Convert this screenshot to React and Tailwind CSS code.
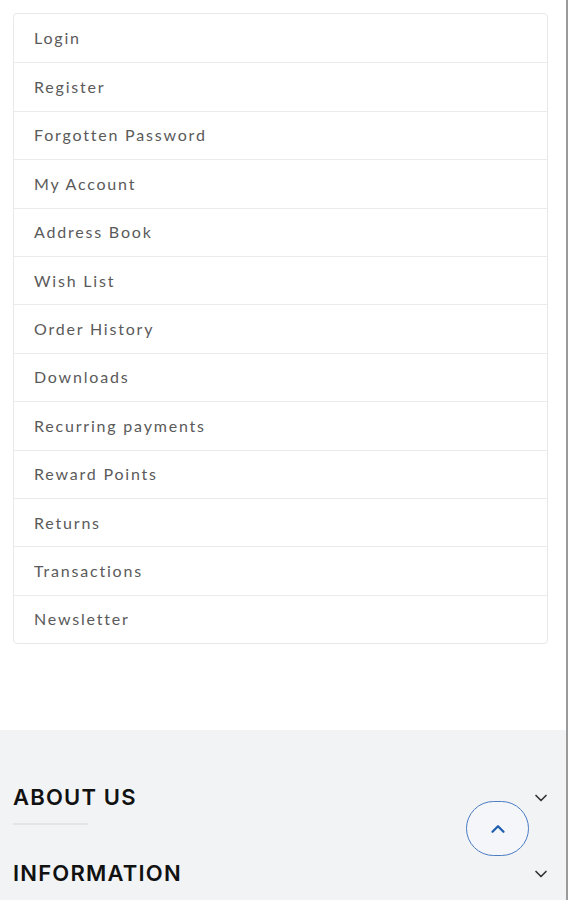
import { ChevronDown, ChevronUp } from 'lucide-react'

const LINKS = [
  'Login',
  'Register',
  'Forgotten Password',
  'My Account',
  'Address Book',
  'Wish List',
  'Order History',
  'Downloads',
  'Recurring payments',
  'Reward Points',
  'Returns',
  'Transactions',
  'Newsletter',
]

export default function App() {
  return (
    <div className="relative w-[568px] h-[900px] overflow-hidden bg-white border-r-2 border-[#9a9a9a]">
      <div className="pl-[13px] pr-[18px] pt-[13px] h-[730px]">
        <ul className="border border-[#e8e8e8] rounded-[4px] bg-white">
          {LINKS.map((l, i) => (
            <li
              key={l}
              className={`h-[48.4px] flex items-center pl-[20px] text-[16px] text-[#5a5a5a] tracking-[1.8px] ${i > 0 ? 'border-t border-[#ebebeb]' : ''}`}
              style={{ fontFamily: 'Lato, "Noto Sans", sans-serif' }}
            >
              {l}
            </li>
          ))}
        </ul>
      </div>

      <footer className="bg-[#f2f3f5] h-[170px] pl-[13px] pr-[18px] pt-[51px]" style={{ fontFamily: 'Inter, sans-serif' }}>
        <div className="flex items-center justify-between">
          <h3 className="text-[22px] font-semibold text-[#111] tracking-[1.2px]">ABOUT US</h3>
          <ChevronDown size={20} strokeWidth={2} className="text-[#333] mr-[-3px]" />
        </div>
        <div className="w-[75px] h-[2px] bg-[#e2e4e8] mt-[9px]" />
        <div className="flex items-center justify-between mt-[32px]">
          <h3 className="text-[22px] font-semibold text-[#111] tracking-[1.2px]">INFORMATION</h3>
          <ChevronDown size={20} strokeWidth={2} className="text-[#333] mr-[-3px]" />
        </div>
      </footer>

      <button className="absolute left-[466px] top-[801px] w-[63px] h-[55px] rounded-full border border-[#4a7cc4] bg-[#f4f6f9] flex items-center justify-center">
        <ChevronUp size={22} strokeWidth={2.5} className="text-[#1f5fae]" />
      </button>
    </div>
  )
}
